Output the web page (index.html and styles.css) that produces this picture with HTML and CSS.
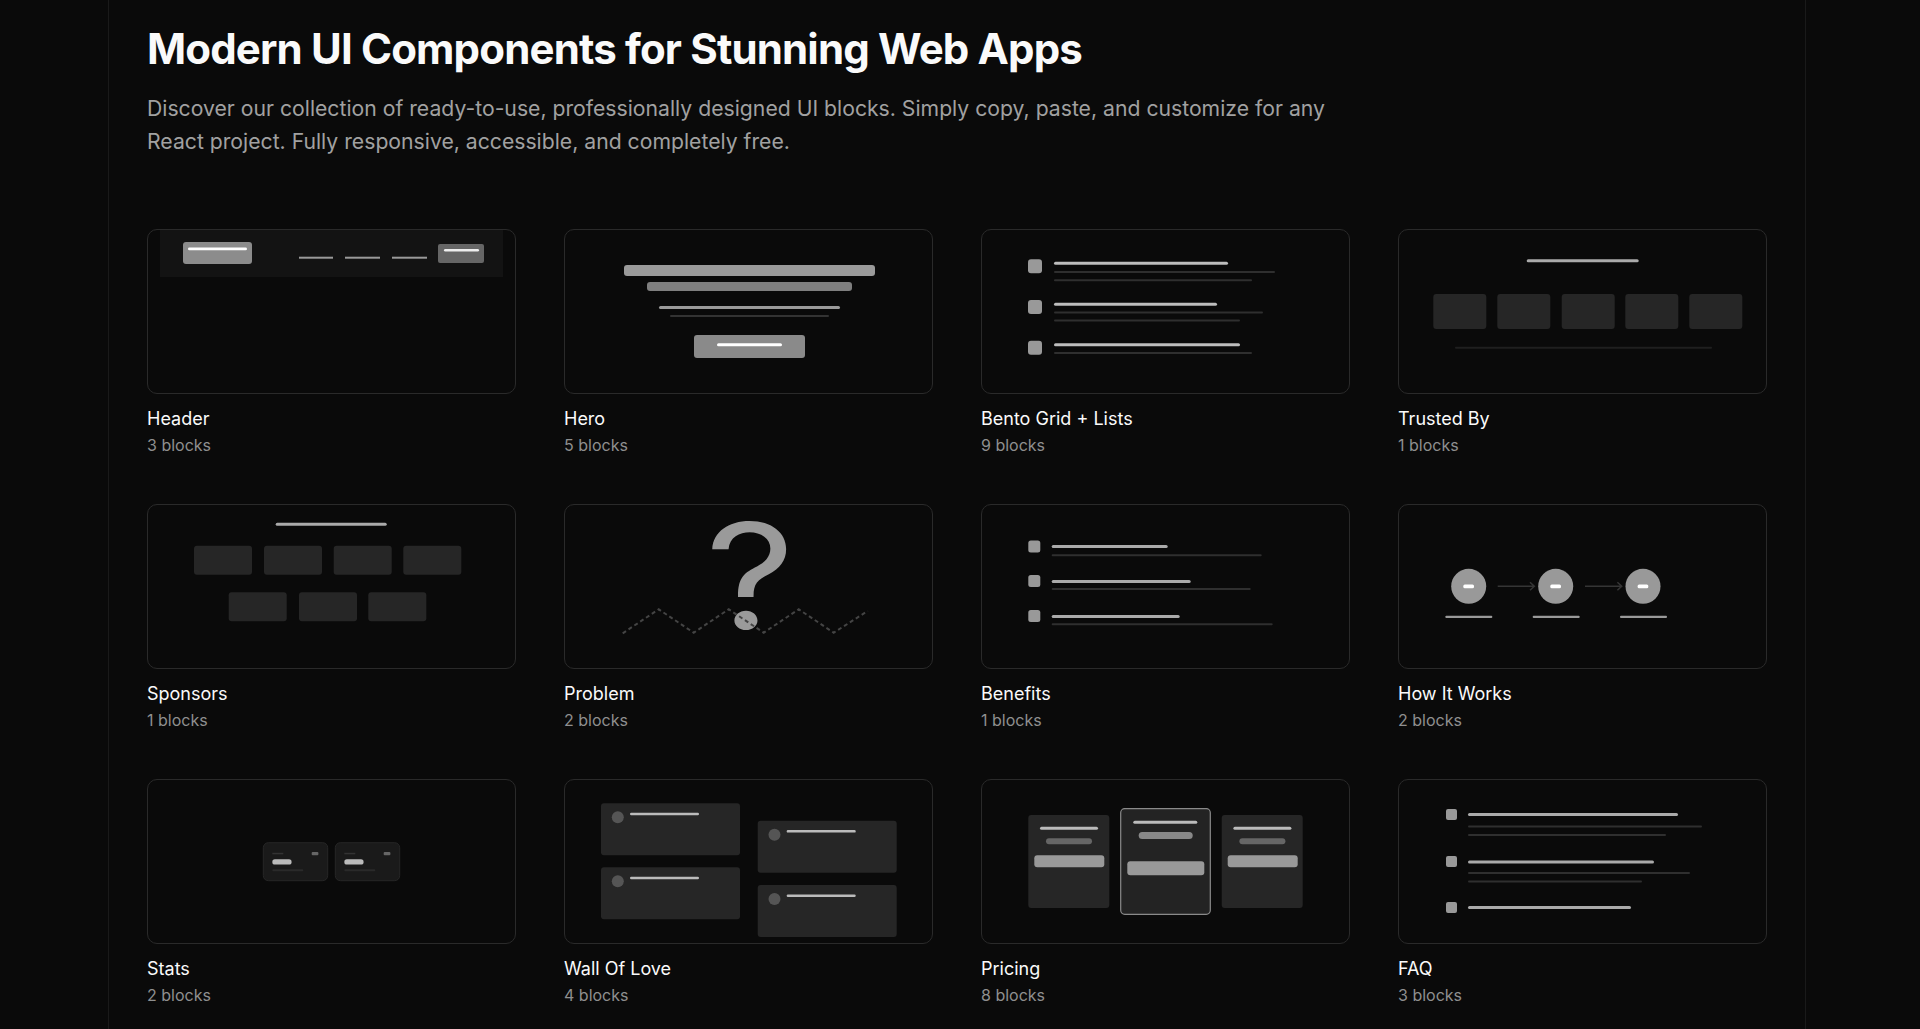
FILE: index.html
```html
<!DOCTYPE html>
<html lang="en">

<head>
    <meta charset="UTF-8">
    <meta name="viewport" content="width=device-width, initial-scale=1.0">
    <title>UI Blocks</title>
    <link rel="stylesheet" href="styles.css">
</head>

<body>
<main class="page">
    <header class="intro">
        <h1>Modern UI Components for Stunning Web Apps</h1>
        <p>Discover our collection of ready-to-use, professionally designed UI blocks. Simply copy, paste, and customize for any React project. Fully responsive, accessible, and completely free.</p>
    </header>

    <section class="grid">
        <!-- header -->
        <a class="item" href="#">
            <div class="thumb">
                <svg viewBox="1 1 367 163" width="367" height="163">
                    <rect x="13" y="1" width="343" height="47" fill="#131313"/>
                    <rect x="36" y="13" width="69" height="22" rx="3" fill="#8c8c8c"/>
                    <rect x="41" y="18.5" width="59" height="2.8" rx="1.4" fill="#fff"/>
                    <rect x="152" y="27.7" width="34" height="2" fill="#9a9a9a"/>
                    <rect x="198" y="27.7" width="35" height="2" fill="#9a9a9a"/>
                    <rect x="245" y="27.7" width="35" height="2" fill="#9a9a9a"/>
                    <rect x="291" y="15" width="46" height="19" rx="2" fill="#666"/>
                    <rect x="297" y="20" width="35" height="2.5" rx="1.2" fill="#eee"/>
                </svg>
            </div>
            <h3>Header</h3>
            <span>3 blocks</span>
        </a>

        <!-- hero -->
        <a class="item" href="#">
            <div class="thumb">
                <svg viewBox="1 1 367 163" width="367" height="163">
                    <rect x="60" y="36" width="251" height="11" rx="3" fill="#9a9a9a"/>
                    <rect x="83" y="53" width="205" height="9" rx="3" fill="#7f7f7f"/>
                    <rect x="95" y="77" width="181" height="3" rx="1.5" fill="#9a9a9a"/>
                    <rect x="106" y="86" width="159" height="2" rx="1" fill="#333"/>
                    <rect x="130" y="106" width="111" height="23" rx="3" fill="#8a8a8a"/>
                    <rect x="153" y="114.3" width="65" height="3" rx="1.5" fill="#fff"/>
                </svg>
            </div>
            <h3>Hero</h3>
            <span>5 blocks</span>
        </a>

        <!-- bento -->
        <a class="item" href="#">
            <div class="thumb">
                <svg viewBox="1 1 367 163" width="367" height="163">
                    <rect x="47" y="30.3" width="14" height="14" rx="3" fill="#999"/>
                    <rect x="73" y="32.7" width="174" height="3" rx="1.5" fill="#bdbdbd"/>
                    <rect x="73" y="42" width="221" height="2" rx="1" fill="#2f2f2f"/>
                    <rect x="73" y="50.3" width="198" height="2" rx="1" fill="#2f2f2f"/>

                    <rect x="47" y="71" width="14" height="14" rx="3" fill="#999"/>
                    <rect x="73" y="73.7" width="163" height="3" rx="1.5" fill="#bdbdbd"/>
                    <rect x="73" y="82.5" width="209" height="2" rx="1" fill="#2f2f2f"/>
                    <rect x="73" y="90.5" width="186" height="2" rx="1" fill="#2f2f2f"/>

                    <rect x="47" y="111.7" width="14" height="14" rx="3" fill="#999"/>
                    <rect x="73" y="114.3" width="186" height="3" rx="1.5" fill="#bdbdbd"/>
                    <rect x="73" y="123" width="198" height="2" rx="1" fill="#2f2f2f"/>
                </svg>
            </div>
            <h3>Bento Grid + Lists</h3>
            <span>9 blocks</span>
        </a>

        <!-- trusted by -->
        <a class="item" href="#">
            <div class="thumb">
                <svg viewBox="1 1 367 163" width="367" height="163">
                    <rect x="128.7" y="30.3" width="112" height="3" rx="1.5" fill="#aaa"/>
                    <rect x="35.3" y="65" width="53" height="35" rx="3" fill="#262626"/>
                    <rect x="99.3" y="65" width="53" height="35" rx="3" fill="#262626"/>
                    <rect x="163.7" y="65" width="53" height="35" rx="3" fill="#262626"/>
                    <rect x="227.3" y="65" width="53" height="35" rx="3" fill="#262626"/>
                    <rect x="291.3" y="65" width="53" height="35" rx="3" fill="#262626"/>
                    <rect x="57" y="117.7" width="257" height="2" rx="1" fill="#1f1f1f"/>
                </svg>
            </div>
            <h3>Trusted By</h3>
            <span>1 blocks</span>
        </a>

        <!-- sponsors -->
        <a class="item" href="#">
            <div class="thumb">
                <svg viewBox="1 1 367 163" width="367" height="163">
                    <rect x="128.7" y="18.7" width="111" height="3" rx="1.5" fill="#aaa"/>
                    <rect x="47" y="41.7" width="58" height="29" rx="3" fill="#262626"/>
                    <rect x="117" y="41.7" width="58" height="29" rx="3" fill="#262626"/>
                    <rect x="186.7" y="41.7" width="58" height="29" rx="3" fill="#262626"/>
                    <rect x="256.3" y="41.7" width="58" height="29" rx="3" fill="#262626"/>
                    <rect x="81.7" y="88.3" width="58" height="29" rx="3" fill="#262626"/>
                    <rect x="152" y="88.3" width="58" height="29" rx="3" fill="#262626"/>
                    <rect x="221.3" y="88.3" width="58" height="29" rx="3" fill="#262626"/>
                </svg>
            </div>
            <h3>Sponsors</h3>
            <span>1 blocks</span>
        </a>

        <!-- problem -->
        <a class="item" href="#">
            <div class="thumb">
                <svg viewBox="1 1 367 163" width="367" height="163">
                    <text class="qmark" transform="translate(186 125) scale(1.2 1)">?</text>
                    <polyline points="58.7,129.3 94.7,105.3 129.7,128.7 164.7,105.3 199.7,128.7 234.7,105.3 269.7,128.7 303.7,107" fill="none" stroke="#444" stroke-width="2" stroke-dasharray="4 3"/>
                </svg>
            </div>
            <h3>Problem</h3>
            <span>2 blocks</span>
        </a>

        <!-- benefits -->
        <a class="item" href="#">
            <div class="thumb">
                <svg viewBox="1 1 367 163" width="367" height="163">
                    <rect x="47.3" y="36.5" width="12" height="12" rx="2.5" fill="#999"/>
                    <rect x="70.7" y="41" width="116" height="3" rx="1.5" fill="#aaa"/>
                    <rect x="70.7" y="50.3" width="210" height="2" rx="1" fill="#2f2f2f"/>

                    <rect x="47.3" y="71" width="12" height="12" rx="2.5" fill="#999"/>
                    <rect x="70.7" y="76" width="139" height="3" rx="1.5" fill="#aaa"/>
                    <rect x="70.7" y="84" width="199" height="2" rx="1" fill="#2f2f2f"/>

                    <rect x="47.3" y="106" width="12" height="12" rx="2.5" fill="#999"/>
                    <rect x="70.7" y="111" width="128" height="3" rx="1.5" fill="#aaa"/>
                    <rect x="70.7" y="119.3" width="221" height="2" rx="1" fill="#2f2f2f"/>
                </svg>
            </div>
            <h3>Benefits</h3>
            <span>1 blocks</span>
        </a>

        <!-- how it works -->
        <a class="item" href="#">
            <div class="thumb">
                <svg viewBox="1 1 367 163" width="367" height="163">
                    <g fill="#999">
                        <circle cx="70.7" cy="82.3" r="17.5"/>
                        <circle cx="157.7" cy="82.3" r="17.5"/>
                        <circle cx="245" cy="82.3" r="17.5"/>
                    </g>
                    <g fill="#fff">
                        <rect x="65.3" y="80.5" width="10.7" height="3.7" rx="1.5"/>
                        <rect x="152.3" y="80.5" width="10.7" height="3.7" rx="1.5"/>
                        <rect x="239.6" y="80.5" width="10.7" height="3.7" rx="1.5"/>
                    </g>
                    <g fill="none" stroke="#353535" stroke-width="1.5">
                        <path d="M99.7 82.3H136.3M132 78.3L136.3 82.3L132 86.3"/>
                        <path d="M187 82.3H223.7M219.4 78.3L223.7 82.3L219.4 86.3"/>
                    </g>
                    <g fill="#999">
                        <rect x="47.3" y="111.7" width="47" height="2.3" rx="1"/>
                        <rect x="134.7" y="111.7" width="47" height="2.3" rx="1"/>
                        <rect x="222" y="111.7" width="47" height="2.3" rx="1"/>
                    </g>
                </svg>
            </div>
            <h3>How It Works</h3>
            <span>2 blocks</span>
        </a>

        <!-- stats -->
        <a class="item" href="#">
            <div class="thumb">
                <svg viewBox="1 1 367 163" width="367" height="163">
                    <rect x="116.3" y="63.7" width="64.4" height="38" rx="5" fill="#1a1a1a" stroke="#262626"/>
                    <rect x="125.3" y="73.8" width="11" height="1.5" fill="#333"/>
                    <rect x="164.7" y="73" width="6.7" height="3.3" rx="1" fill="#666"/>
                    <rect x="125.3" y="80.3" width="19.3" height="5.3" rx="2.6" fill="#bbb"/>
                    <rect x="125.3" y="90.3" width="31" height="2" rx="1" fill="#2a2a2a"/>

                    <rect x="188.3" y="63.7" width="64.4" height="38" rx="5" fill="#1a1a1a" stroke="#262626"/>
                    <rect x="197.3" y="73.8" width="11" height="1.5" fill="#333"/>
                    <rect x="236.7" y="73" width="6.7" height="3.3" rx="1" fill="#666"/>
                    <rect x="197.3" y="80.3" width="19.3" height="5.3" rx="2.6" fill="#bbb"/>
                    <rect x="197.3" y="90.3" width="31" height="2" rx="1" fill="#2a2a2a"/>
                </svg>
            </div>
            <h3>Stats</h3>
            <span>2 blocks</span>
        </a>

        <!-- wall of love -->
        <a class="item" href="#">
            <div class="thumb">
                <svg viewBox="1 1 367 163" width="367" height="163">
                    <rect x="37" y="24.3" width="139" height="52" rx="3" fill="#262626"/>
                    <circle cx="53.8" cy="38.3" r="6" fill="#555"/>
                    <rect x="66" y="33.7" width="69" height="2.5" rx="1.2" fill="#bbb"/>

                    <rect x="37" y="88.3" width="139" height="52" rx="3" fill="#262626"/>
                    <circle cx="53.8" cy="102.3" r="6" fill="#555"/>
                    <rect x="66" y="97.7" width="69" height="2.5" rx="1.2" fill="#bbb"/>

                    <rect x="193.7" y="41.7" width="139" height="52" rx="3" fill="#262626"/>
                    <circle cx="210.5" cy="55.7" r="6" fill="#555"/>
                    <rect x="222.7" y="51.1" width="69" height="2.5" rx="1.2" fill="#bbb"/>

                    <rect x="193.7" y="106" width="139" height="52" rx="3" fill="#262626"/>
                    <circle cx="210.5" cy="120" r="6" fill="#555"/>
                    <rect x="222.7" y="115.4" width="69" height="2.5" rx="1.2" fill="#bbb"/>
                </svg>
            </div>
            <h3>Wall Of Love</h3>
            <span>4 blocks</span>
        </a>

        <!-- pricing -->
        <a class="item" href="#">
            <div class="thumb">
                <svg viewBox="1 1 367 163" width="367" height="163">
                    <rect x="47.3" y="36" width="81" height="93" rx="3" fill="#262626"/>
                    <rect x="59" y="47.7" width="58" height="3" rx="1.5" fill="#bbb"/>
                    <rect x="65" y="59.3" width="46" height="6" rx="3" fill="#666"/>
                    <rect x="53.3" y="76.3" width="70" height="12" rx="3" fill="#999"/>

                    <rect x="139.7" y="29.7" width="89.6" height="105.6" rx="4" fill="#232323" stroke="#8a8a8a" stroke-width="1.2"/>
                    <rect x="152.3" y="41.7" width="64" height="3" rx="1.5" fill="#bbb"/>
                    <rect x="157.7" y="53" width="54" height="7" rx="3.5" fill="#888"/>
                    <rect x="146.3" y="82.3" width="77" height="14" rx="3" fill="#999"/>

                    <rect x="240.7" y="36" width="81" height="93" rx="3" fill="#262626"/>
                    <rect x="252.4" y="47.7" width="58" height="3" rx="1.5" fill="#bbb"/>
                    <rect x="258.4" y="59.3" width="46" height="6" rx="3" fill="#666"/>
                    <rect x="246.7" y="76.3" width="70" height="12" rx="3" fill="#999"/>
                </svg>
            </div>
            <h3>Pricing</h3>
            <span>8 blocks</span>
        </a>

        <!-- faq -->
        <a class="item" href="#">
            <div class="thumb">
                <svg viewBox="1 1 367 163" width="367" height="163">
                    <rect x="48" y="30" width="11" height="11" rx="2" fill="#999"/>
                    <rect x="70" y="34" width="210" height="3" rx="1.5" fill="#aaa"/>
                    <rect x="70" y="46.5" width="234" height="2" rx="1" fill="#2f2f2f"/>
                    <rect x="70" y="55" width="198" height="2" rx="1" fill="#2f2f2f"/>

                    <rect x="48" y="77" width="11" height="11" rx="2" fill="#999"/>
                    <rect x="70" y="81.5" width="186" height="3" rx="1.5" fill="#aaa"/>
                    <rect x="70" y="93" width="222" height="2" rx="1" fill="#2f2f2f"/>
                    <rect x="70" y="101.5" width="174" height="2" rx="1" fill="#2f2f2f"/>

                    <rect x="48" y="123" width="11" height="11" rx="2" fill="#999"/>
                    <rect x="70" y="127" width="163" height="3" rx="1.5" fill="#aaa"/>
                </svg>
            </div>
            <h3>FAQ</h3>
            <span>3 blocks</span>
        </a>
    </section>
</main>
</body>

</html>
```

FILE: styles.css
```css
* {
    padding: 0;
    margin: 0;
    box-sizing: border-box;
}

body {
    background-color: #0a0a0a;
    color: #fafafa;
    font-family: Inter, "Noto Sans", sans-serif;
}

.page {
    width: 1698px;
    min-height: 100vh;
    margin-left: 108px;
    padding: 24px 38px 48px;
    border-left: 1px solid #1a1a1a;
    border-right: 1px solid #1a1a1a;
}

.intro h1 {
    font-size: 42px;
    line-height: 50px;
    font-weight: 700;
    letter-spacing: -0.02em;
}

.intro p {
    max-width: 1200px;
    margin-top: 18px;
    font-size: 21.2px;
    line-height: 33px;
    color: #a1a1a1;
}

.grid {
    display: grid;
    grid-template-columns: repeat(4, 1fr);
    column-gap: 48px;
    row-gap: 47px;
    margin-top: 71px;
}

.item {
    display: block;
    color: inherit;
    text-decoration: none;
}

.thumb {
    height: 165px;
    border: 1px solid #2a2a2a;
    border-radius: 10px;
    background-color: #0a0a0a;
}

.thumb svg {
    display: block;
    overflow: visible;
}

.item h3 {
    margin-top: 11px;
    font-size: 18px;
    line-height: 28px;
    font-weight: 400;
}

.item span {
    display: block;
    font-size: 16px;
    line-height: 24px;
    color: #8f8f8f;
}

.qmark {
    font-family: Inter, sans-serif;
    font-size: 146px;
    font-weight: 400;
    fill: #9a9a9a;
    text-anchor: middle;
}
```
